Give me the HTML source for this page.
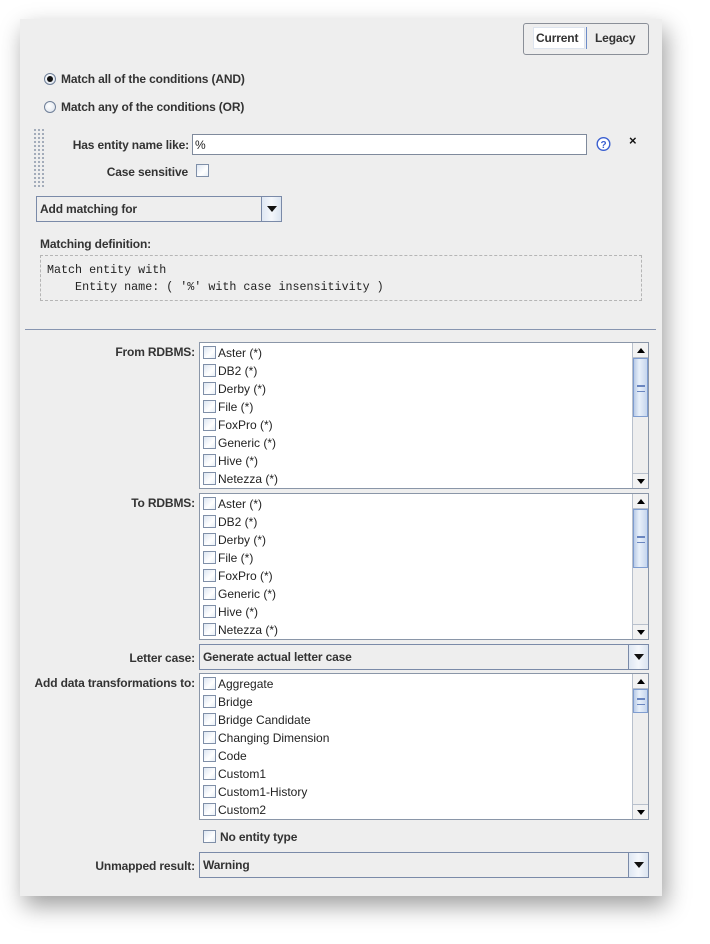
<!DOCTYPE html>
<html><head><meta charset="utf-8"><style>
*{box-sizing:border-box;margin:0;padding:0}
body{width:710px;height:944px;background:#fff;position:relative;overflow:hidden;font-family:"Liberation Sans",sans-serif;font-size:12px;color:#222}
.abs{position:absolute}
#panel{left:20px;top:19px;width:642px;height:877px;background:#eeeeee;box-shadow:4px 10px 22px rgba(0,0,0,.38)}
.b{font-weight:bold;color:#333;white-space:nowrap;letter-spacing:-0.15px}
.lbl{position:absolute;font-weight:bold;color:#333;text-align:right;white-space:nowrap;letter-spacing:-0.15px}
.cb{position:absolute;width:13px;height:13px;border:1px solid #7f8fa8;background:linear-gradient(135deg,#dde6f2,#fff 60%,#e8eef6)}
.list{position:absolute;left:199px;width:450px;height:147px;background:#fff;border:1px solid #8a96a8;overflow:hidden}
.item{position:absolute;left:18px;font-size:12px;color:#222;white-space:nowrap}
.sb{position:absolute;right:0;top:0;width:16px;height:100%;background:#eeeeee;border-left:1px solid #b8c0cc}
.up,.dn{position:absolute;left:0;width:15px;height:15px;background:#f2f2f2}
.up{top:0;border-bottom:1px solid #b8c0cc}
.dn{bottom:0;border-top:1px solid #b8c0cc}
.up:after{content:"";position:absolute;left:4px;top:5px;border:4px solid transparent;border-bottom:5px solid #000;border-top:0}
.dn:after{content:"";position:absolute;left:4px;top:5px;border:4px solid transparent;border-top:5px solid #000;border-bottom:0}
.thumb{position:absolute;left:0;width:15px;background:linear-gradient(90deg,#b9cbe6,#e8f0fa 40%,#c6d6ee);border:1px solid #7f9dd0}
.thumb:after{content:"";position:absolute;left:3px;top:50%;margin-top:-3px;width:8px;height:5px;border-top:1px solid #6a86c0;border-bottom:1px solid #6a86c0;box-shadow:0 2px 0 -1px #6a86c0 inset}
.combo{position:absolute;height:26px;border:1px solid #7a8aa8;background:#eeeeee}
.combo .t{position:absolute;left:3px;top:5px;font-weight:bold;color:#333;letter-spacing:-0.15px}
.combo .btn{position:absolute;right:0;top:0;width:20px;height:24px;border-left:1px solid #7a8aa8;background:linear-gradient(90deg,#dfe7f3,#f4f7fb 50%,#dbe4f0)}
.combo .btn:after{content:"";position:absolute;left:5px;top:9px;border:5px solid transparent;border-top:6px solid #111;border-bottom:0}
.radio{position:absolute;width:12px;height:12px;border-radius:50%;border:1px solid #6f7f98;background:radial-gradient(circle at 40% 40%,#fff,#d8e0ea)}
</style></head><body>
<div id="panel" class="abs"></div>

<div class="abs" style="left:523px;top:23px;width:126px;height:32px;border:1px solid #8a8f98;border-radius:3px;background:#eeeeee"></div>
<div class="abs" style="left:533px;top:27px;width:52px;height:22px;background:#fff;border:1px solid #dde4ee"></div>
<div class="abs" style="left:586px;top:27px;width:1px;height:22px;background:#6d8cc8"></div>
<div class="abs b" style="left:536px;top:31px">Current</div>
<div class="abs b" style="left:595px;top:31px">Legacy</div>

<div class="radio" style="left:44px;top:73px"></div>
<div class="abs" style="left:47px;top:76px;width:6px;height:6px;border-radius:50%;background:#111"></div>
<div class="abs b" style="left:61px;top:72px">Match all of the conditions (AND)</div>
<div class="radio" style="left:44px;top:101px"></div>
<div class="abs b" style="left:61px;top:100px">Match any of the conditions (OR)</div>

<div class="abs" style="left:33px;top:128px;width:12px;height:60px;background-image:radial-gradient(circle,#8a96a8 0.8px,transparent 1px);background-size:4px 4px"></div>

<div class="lbl" style="right:521px;top:138px">Has entity name like:</div>
<div class="abs" style="left:192px;top:134px;width:395px;height:21px;background:#fff;border:1px solid #7f8a9c"></div>
<div class="abs" style="left:195px;top:138px">%</div>
<svg class="abs" style="left:596px;top:136px" width="15" height="16" viewBox="0 0 15 16"><circle cx="7.5" cy="8" r="6.3" fill="#fff" stroke="#3a5fd0" stroke-width="1.4"/><text x="7.5" y="12" font-size="10" font-weight="bold" text-anchor="middle" fill="#3a5fd0" font-family="Liberation Sans">?</text></svg>
<div class="abs b" style="left:629px;top:133px;font-size:13px;color:#111">×</div>
<div class="lbl" style="right:522px;top:165px">Case sensitive</div>
<div class="cb" style="left:196px;top:164px"></div>

<div class="combo" style="left:36px;top:196px;width:246px"><div class="t">Add matching for</div><div class="btn"></div></div>

<div class="abs b" style="left:40px;top:237px">Matching definition:</div>
<div class="abs" style="left:40px;top:255px;width:602px;height:46px;border:1px dashed #b5b5b5"></div>
<div class="abs" style="left:47px;top:262px;font-family:'Liberation Mono',monospace;font-size:11.7px;white-space:pre;line-height:17px;color:#222">Match entity with
    Entity name: ( '%' with case insensitivity )</div>

<div class="abs" style="left:25px;top:329px;width:631px;height:1px;background:#8795b0"></div>

<div class="lbl" style="right:515px;top:345px">From RDBMS:</div>
<div class="list" style="top:342px">
<div class="cb" style="left:3px;top:3px"></div><div class="item" style="top:3px">Aster (*)</div>
<div class="cb" style="left:3px;top:21px"></div><div class="item" style="top:21px">DB2 (*)</div>
<div class="cb" style="left:3px;top:39px"></div><div class="item" style="top:39px">Derby (*)</div>
<div class="cb" style="left:3px;top:57px"></div><div class="item" style="top:57px">File (*)</div>
<div class="cb" style="left:3px;top:75px"></div><div class="item" style="top:75px">FoxPro (*)</div>
<div class="cb" style="left:3px;top:93px"></div><div class="item" style="top:93px">Generic (*)</div>
<div class="cb" style="left:3px;top:111px"></div><div class="item" style="top:111px">Hive (*)</div>
<div class="cb" style="left:3px;top:129px"></div><div class="item" style="top:129px">Netezza (*)</div>
<div class="sb"><div class="up"></div><div class="thumb" style="top:15px;height:59px"></div><div class="dn"></div></div>
</div>

<div class="lbl" style="right:515px;top:496px">To RDBMS:</div>
<div class="list" style="top:493px">
<div class="cb" style="left:3px;top:3px"></div><div class="item" style="top:3px">Aster (*)</div>
<div class="cb" style="left:3px;top:21px"></div><div class="item" style="top:21px">DB2 (*)</div>
<div class="cb" style="left:3px;top:39px"></div><div class="item" style="top:39px">Derby (*)</div>
<div class="cb" style="left:3px;top:57px"></div><div class="item" style="top:57px">File (*)</div>
<div class="cb" style="left:3px;top:75px"></div><div class="item" style="top:75px">FoxPro (*)</div>
<div class="cb" style="left:3px;top:93px"></div><div class="item" style="top:93px">Generic (*)</div>
<div class="cb" style="left:3px;top:111px"></div><div class="item" style="top:111px">Hive (*)</div>
<div class="cb" style="left:3px;top:129px"></div><div class="item" style="top:129px">Netezza (*)</div>
<div class="sb"><div class="up"></div><div class="thumb" style="top:15px;height:59px"></div><div class="dn"></div></div>
</div>

<div class="lbl" style="right:515px;top:651px">Letter case:</div>
<div class="combo" style="left:199px;top:644px;width:450px"><div class="t">Generate actual letter case</div><div class="btn"></div></div>

<div class="lbl" style="right:515px;top:676px">Add data transformations to:</div>
<div class="list" style="top:673px">
<div class="cb" style="left:3px;top:3px"></div><div class="item" style="top:3px">Aggregate</div>
<div class="cb" style="left:3px;top:21px"></div><div class="item" style="top:21px">Bridge</div>
<div class="cb" style="left:3px;top:39px"></div><div class="item" style="top:39px">Bridge Candidate</div>
<div class="cb" style="left:3px;top:57px"></div><div class="item" style="top:57px">Changing Dimension</div>
<div class="cb" style="left:3px;top:75px"></div><div class="item" style="top:75px">Code</div>
<div class="cb" style="left:3px;top:93px"></div><div class="item" style="top:93px">Custom1</div>
<div class="cb" style="left:3px;top:111px"></div><div class="item" style="top:111px">Custom1-History</div>
<div class="cb" style="left:3px;top:129px"></div><div class="item" style="top:129px">Custom2</div>
<div class="sb"><div class="up"></div><div class="thumb" style="top:15px;height:24px"></div><div class="dn"></div></div>
</div>

<div class="cb" style="left:203px;top:830px"></div>
<div class="abs b" style="left:220px;top:830px">No entity type</div>

<div class="lbl" style="right:515px;top:859px">Unmapped result:</div>
<div class="combo" style="left:199px;top:852px;width:450px"><div class="t">Warning</div><div class="btn"></div></div>
</body></html>
